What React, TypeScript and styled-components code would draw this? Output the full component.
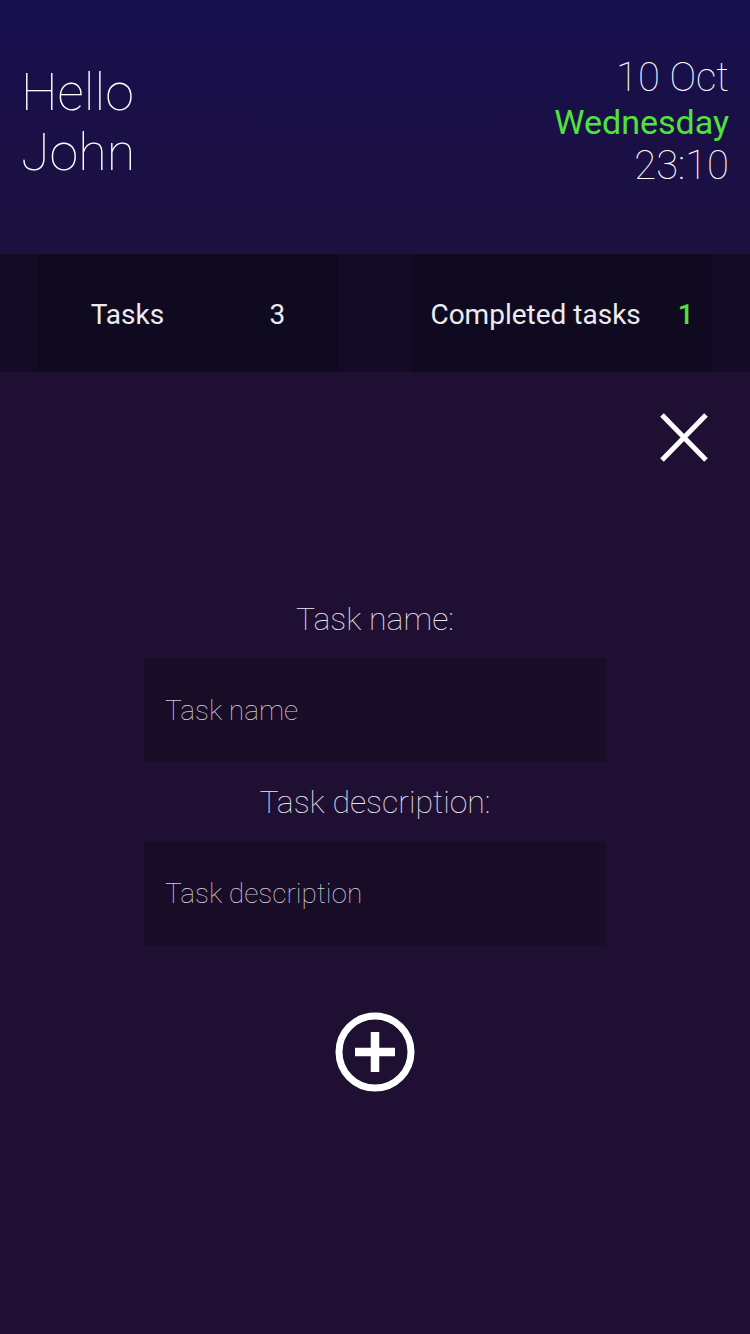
import React from "react";
import styled, { createGlobalStyle } from "styled-components";

const Global = createGlobalStyle`
  html, body { margin: 0; padding: 0; background: #1e0f33; }
  body { font-family: Roboto, "Noto Sans", sans-serif; }
  * { box-sizing: border-box; }
`;

const Page = styled.div`
  width: 750px;
  min-height: 1334px;
  display: flex;
  flex-direction: column;
  background: #1e0f33;
  color: #ffffff;
`;

const Header = styled.header`
  height: 254px;
  display: flex;
  justify-content: space-between;
  align-items: center;
  padding: 0 21px 0 21px;
  background: linear-gradient(180deg, #170f4f 0%, #1b1045 60%, #1d1040 100%);
`;

const Greeting = styled.div`
  font-weight: 100;
  font-size: 52px;
  line-height: 60px;
  color: #ffffff;
  margin-top: -9px;
`;

const DateBlock = styled.div`
  display: flex;
  flex-direction: column;
  align-items: flex-end;
  margin-top: -10px;
`;

const DateLine = styled.div<{ $green?: boolean }>`
  font-weight: ${(p) => (p.$green ? 400 : 100)};
  font-size: ${(p) => (p.$green ? "34px" : "40px")};
  line-height: ${(p) => (p.$green ? "42px" : "46px")};
  color: ${(p) => (p.$green ? "#4fe33b" : "#ffffff")};
`;

const StatsStrip = styled.section`
  height: 118px;
  display: flex;
  justify-content: space-between;
  padding: 0 38px;
  background: #140b26;
`;

const StatCard = styled.div`
  width: 300px;
  height: 100%;
  display: flex;
  align-items: center;
  justify-content: space-around;
  background: #100a20;
  font-size: 28px;
  font-weight: 400;
  color: #ecebf0;
  padding-top: 2px;
`;

const StatValue = styled.span<{ $green?: boolean }>`
  color: ${(p) => (p.$green ? "#4fe33b" : "#ecebf0")};
  font-weight: ${(p) => (p.$green ? 500 : 400)};
`;

const Main = styled.main`
  flex: 1;
  display: flex;
  flex-direction: column;
  align-items: center;
  padding: 41px 42px 0 42px;
`;

const CloseRow = styled.div`
  align-self: stretch;
  display: flex;
  justify-content: flex-end;
`;

const IconButton = styled.button`
  background: none;
  border: none;
  padding: 0;
  margin: 0;
  display: flex;
  cursor: pointer;
`;

const Form = styled.form`
  display: flex;
  flex-direction: column;
  align-items: center;
  margin-top: 137px;
  width: 462px;
`;

const Label = styled.label`
  font-weight: 100;
  font-size: 32px;
  line-height: 40px;
  color: #ebe6f0;
  margin-bottom: 19px;
`;

const Input = styled.input`
  width: 462px;
  height: 104px;
  background: #180c27;
  border: none;
  outline: none;
  padding: 0 21px;
  font-family: Roboto, "Noto Sans", sans-serif;
  font-weight: 100;
  font-size: 28px;
  color: #ffffff;
  margin-bottom: 20px;
  &::placeholder {
    color: #d2cbd8;
  }
`;

const AddButton = styled(IconButton)`
  margin-top: 47px;
`;

export default function App() {
  return (
    <Page>
      <Global />
      <Header>
        <Greeting>
          Hello
          <br />
          John
        </Greeting>
        <DateBlock>
          <DateLine>10 Oct</DateLine>
          <DateLine $green>Wednesday</DateLine>
          <DateLine>23:10</DateLine>
        </DateBlock>
      </Header>
      <StatsStrip>
        <StatCard>
          <span>Tasks</span>
          <StatValue>3</StatValue>
        </StatCard>
        <StatCard>
          <span>Completed tasks</span>
          <StatValue $green>1</StatValue>
        </StatCard>
      </StatsStrip>
      <Main>
        <CloseRow>
          <IconButton type="button" aria-label="Close">
            <svg width="48" height="49" viewBox="0 0 48 49">
              <path d="M2 2 L46 47 M46 2 L2 47" stroke="#ffffff" strokeWidth="5" fill="none" />
            </svg>
          </IconButton>
        </CloseRow>
        <Form onSubmit={(e) => e.preventDefault()}>
          <Label htmlFor="tname">Task name:</Label>
          <Input id="tname" placeholder="Task name" />
          <Label htmlFor="tdesc">Task description:</Label>
          <Input id="tdesc" placeholder="Task description" />
          <AddButton type="submit" aria-label="Add task">
            <svg width="80" height="80" viewBox="0 0 80 80">
              <circle cx="40" cy="40" r="36" stroke="#ffffff" strokeWidth="7" fill="none" />
              <path d="M20 40 H60 M40 20 V60" stroke="#ffffff" strokeWidth="8.5" fill="none" />
            </svg>
          </AddButton>
        </Form>
      </Main>
    </Page>
  );
}
